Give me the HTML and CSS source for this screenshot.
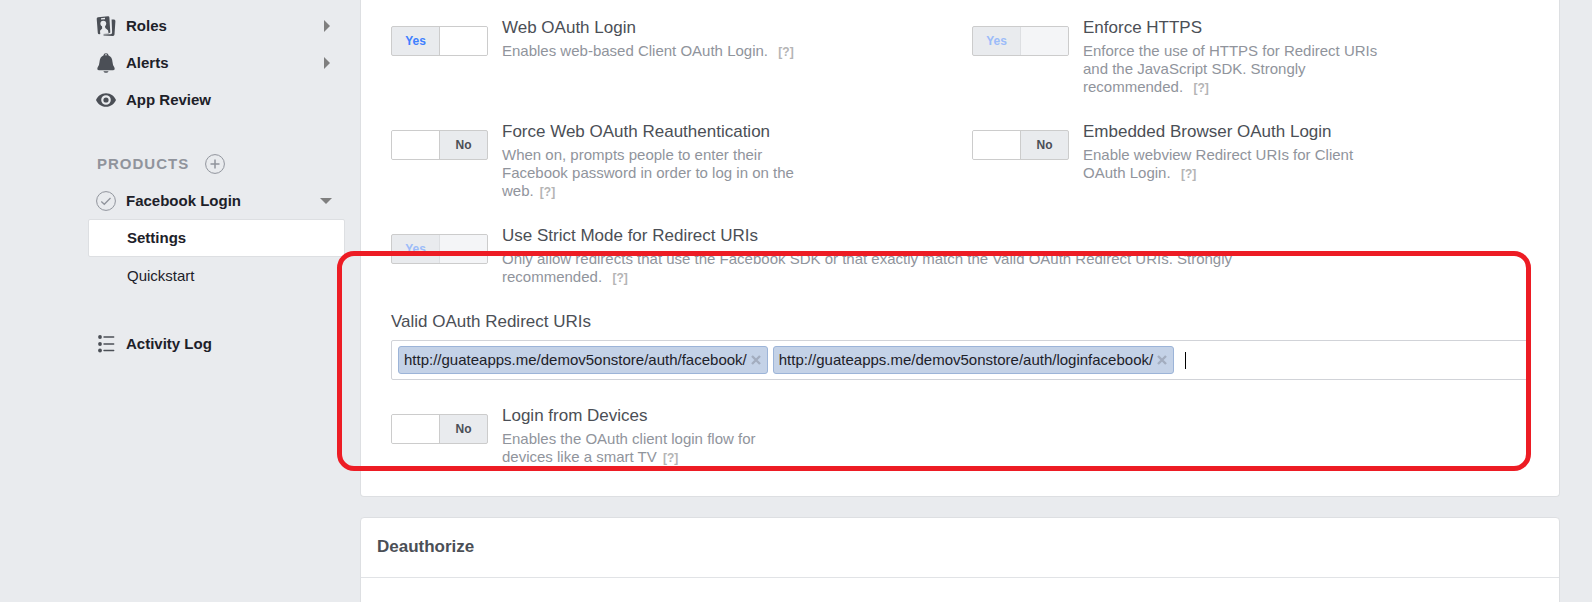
FILE: index.html
```html
<!DOCTYPE html>
<html lang="en">
<head>
<meta charset="utf-8">
<title>Facebook Login Settings</title>
<link rel="stylesheet" href="styles.css">
</head>
<body>
<div class="page">
  <nav class="sidebar" aria-label="App navigation">
    <a class="nav-item" href="#roles">
      <svg class="nav-icon" viewBox="0 0 20 20" aria-hidden="true">
        <path fill="#4b4f56" d="M2 1.200 12 .3Q13.300.2 13.400 1.500L14.300 16.500 12.600 17.400 4.500 18 3.300 18.200Q1.900 18.200 1.800 17L.7 2.700Q.7 1.400 2 1.200Z"/>
        <g fill="#e9ebee"><path d="M5 2.200 9 1.800V3.200L5 3.500Z"/><circle cx="7.300" cy="7.600" r="2.900"/><path d="M6 10H9L9.300 12 12 14.300 12.600 17.400 4.300 18.200 4 14.800 6.200 12.500Z"/></g>
        <path fill="#4b4f56" d="M15.600 3.400 18 3.600Q19.500 3.800 19.400 5.200L18.500 18.500Q18.300 19.900 17 19.900L7.500 19.400V18.500L14.500 18.200Q16.200 18 16.100 16.500Z"/>
      </svg>
      <span class="nav-label">Roles</span>
      <svg class="nav-arrow" viewBox="0 0 12 12" aria-hidden="true"><path fill="#7f7f7f" d="M4 0 10 6 4 12Z"/></svg>
    </a>
    <a class="nav-item" href="#alerts">
      <svg class="nav-icon" viewBox="0 0 20 20" aria-hidden="true">
        <path fill="#4b4f56" fill-rule="evenodd" d="M10 .3Q12.400.3 12.600 2.600 16.200 4 16.500 9 16.700 12.500 18.400 14.500 19.400 17.300 17 17.300H3Q.6 17.300 1.600 14.500 3.300 12.500 3.500 9 3.800 4 7.400 2.600 7.600.3 10 .3ZM10 1.200Q8.900 1.200 8.700 2.200H11.300Q11.100 1.200 10 1.200Z"/>
        <path fill="#4b4f56" d="M7.400 18.300H12.600Q12 19.800 10 19.800T7.400 18.300Z"/>
      </svg>
      <span class="nav-label">Alerts</span>
      <svg class="nav-arrow" viewBox="0 0 12 12" aria-hidden="true"><path fill="#7f7f7f" d="M4 0 10 6 4 12Z"/></svg>
    </a>
    <a class="nav-item" href="#review">
      <svg class="nav-icon" viewBox="0 0 20 20" aria-hidden="true">
        <path fill="#4b4f56" fill-rule="evenodd" d="M10 3.200C15 3.200 18.500 6.500 20 10 18.500 13.500 15 16.800 10 16.800S1.500 13.500 0 10C1.500 6.500 5 3.200 10 3.200ZM10 5.200A4.800 4.800 0 1 0 10 14.800 4.800 4.800 0 1 0 10 5.200Z"/>
        <circle cx="10" cy="10" r="2.600" fill="#4b4f56"/>
      </svg>
      <span class="nav-label">App Review</span>
    </a>

    <div class="nav-heading">
      <h2 class="heading-text">PRODUCTS</h2>
      <button class="add-button" type="button" aria-label="Add product">
        <svg class="nav-icon" viewBox="0 0 20 20" aria-hidden="true" fill="none" stroke="#90949c"><circle cx="10" cy="10" r="9.400"/><path stroke-width="1.500" d="M10 5.500V14.500M5.500 10H14.500"/></svg>
      </button>
    </div>

    <a class="nav-item" href="#login">
      <svg class="nav-icon" viewBox="0 0 20 20" aria-hidden="true" fill="none" stroke="#90949c"><circle cx="10" cy="10" r="9.400"/><path stroke-width="1.300" d="M5.300 10.500 8.300 13.300 14.500 7"/></svg>
      <span class="nav-label">Facebook Login</span>
      <svg class="nav-arrow" viewBox="0 0 12 12" aria-hidden="true"><path fill="#7f7f7f" d="M0 3H12L6 9Z"/></svg>
    </a>
    <a class="sub-item selected" href="#settings" aria-current="page">Settings</a>
    <a class="sub-item" href="#quickstart">Quickstart</a>

    <a class="nav-item activity" href="#activity">
      <svg class="nav-icon" viewBox="0 0 20 20" aria-hidden="true">
        <g fill="#4b4f56"><circle cx="4" cy="3" r="1.900"/><circle cx="4" cy="10" r="1.900"/><circle cx="4" cy="16.500" r="1.900"/></g>
        <path stroke="#4b4f56" stroke-width="1.400" stroke-linecap="round" d="M8 3H17.700M8 10H17.700M8 16.500H17.700"/>
      </svg>
      <span class="nav-label">Activity Log</span>
    </a>
  </nav>

  <main class="content">
    <section class="card settings-card">
      <div class="setting-grid">
        <div class="setting">
          <button class="toggle on" type="button" role="switch" aria-checked="true" aria-labelledby="t1"><span class="toggle-text">Yes</span><span class="knob"></span></button>
          <div class="setting-body">
            <h3 class="title" id="t1">Web OAuth Login</h3>
            <p class="desc">Enables web-based Client OAuth Login. &nbsp;<a class="help spaced" href="#help">[?]</a></p>
          </div>
        </div>
        <div class="setting">
          <button class="toggle on" type="button" role="switch" aria-checked="true" aria-labelledby="t2" disabled><span class="toggle-text">Yes</span><span class="knob"></span></button>
          <div class="setting-body">
            <h3 class="title" id="t2">Enforce HTTPS</h3>
            <p class="desc">Enforce the use of HTTPS for Redirect URIs and the JavaScript SDK. Strongly recommended. &nbsp;<a class="help spaced" href="#help">[?]</a></p>
          </div>
        </div>
        <div class="setting">
          <button class="toggle" type="button" role="switch" aria-checked="false" aria-labelledby="t3"><span class="knob"></span><span class="toggle-text">No</span></button>
          <div class="setting-body">
            <h3 class="title" id="t3">Force Web OAuth Reauthentication</h3>
            <p class="desc">When on, prompts people to enter their Facebook password in order to log in on the web. <a class="help spaced" href="#help">[?]</a></p>
          </div>
        </div>
        <div class="setting">
          <button class="toggle" type="button" role="switch" aria-checked="false" aria-labelledby="t4"><span class="knob"></span><span class="toggle-text">No</span></button>
          <div class="setting-body">
            <h3 class="title" id="t4">Embedded Browser OAuth Login</h3>
            <p class="desc">Enable webview Redirect URIs for Client OAuth Login. &nbsp;<a class="help spaced" href="#help">[?]</a></p>
          </div>
        </div>
      </div>

      <div class="setting">
        <button class="toggle on" type="button" role="switch" aria-checked="true" aria-labelledby="t5" disabled><span class="toggle-text">Yes</span><span class="knob"></span></button>
        <div class="setting-body">
          <h3 class="title" id="t5">Use Strict Mode for Redirect URIs</h3>
          <p class="desc wide">Only allow redirects that use the Facebook SDK or that exactly match the Valid OAuth Redirect URIs. Strongly recommended. &nbsp;<a class="help spaced" href="#help">[?]</a></p>
        </div>
      </div>

      <div class="field">
        <label class="title" for="uris">Valid OAuth Redirect URIs</label>
        <div class="token-box">
          <span class="token">http://guateapps.me/demov5onstore/auth/facebook/<button class="remove" type="button" aria-label="Remove"><svg class="cross" viewBox="0 0 10 10" aria-hidden="true"><path stroke="#a3adbf" stroke-width="2.400" d="M1 1 9 9M9 1 1 9"/></svg></button></span>
          <span class="token">http://guateapps.me/demov5onstore/auth/loginfacebook/<button class="remove" type="button" aria-label="Remove"><svg class="cross" viewBox="0 0 10 10" aria-hidden="true"><path stroke="#a3adbf" stroke-width="2.400" d="M1 1 9 9M9 1 1 9"/></svg></button></span>
          <span class="caret"></span>
          <input class="token-input" id="uris" type="text">
        </div>
      </div>

      <div class="setting">
        <button class="toggle" type="button" role="switch" aria-checked="false" aria-labelledby="t6"><span class="knob"></span><span class="toggle-text">No</span></button>
        <div class="setting-body">
          <h3 class="title" id="t6">Login from Devices</h3>
          <p class="desc">Enables the OAuth client login flow for devices like a smart TV <a class="help spaced" href="#help">[?]</a></p>
        </div>
      </div>
    </section>

    <section class="card next-card">
      <h2 class="card-header">Deauthorize</h2>
    </section>

    <div class="highlight"></div>
  </main>
</div>
</body>
</html>
```
FILE: styles.css
```css
* { box-sizing: border-box; }

body {
  margin: 0;
  background: #e9ebee;
  color: #1d2129;
  font: 15px/18px "Liberation Sans", Arial, sans-serif;
}

h2, h3, p { margin: 0; }
a { color: inherit; text-decoration: none; }
button { font: inherit; padding: 0; cursor: pointer; }

.page {
  display: flex;
  gap: 15px;
  height: 100vh;
  padding: 0 32px 0 88px;
  overflow: hidden;
}

/* Sidebar */
.sidebar { flex: 0 0 257px; padding-top: 7px; }

.nav-item {
  display: flex;
  align-items: center;
  height: 37px;
  padding: 0 13px 0 8px;
  font-weight: bold;
}
.nav-icon { display: block; width: 20px; height: 20px; }
.nav-label { flex: 1; margin-left: 10px; }
.nav-arrow { width: 12px; height: 12px; }

.nav-heading {
  display: flex;
  align-items: center;
  gap: 16px;
  height: 37px;
  margin-top: 27px;
  padding-left: 9px;
}
.heading-text {
  color: #90949c;
  font-size: 15px;
  letter-spacing: 1px;
}
.add-button { border: 0; background: none; }

.sub-item {
  display: flex;
  align-items: center;
  height: 37px;
  padding-left: 38px;
  border: 1px solid transparent;
}
.selected {
  height: 38px;
  border-color: #dddfe2;
  border-radius: 2px;
  background: #fff;
  font-weight: bold;
}
.activity { margin-top: 31px; }

/* Content */
.content {
  position: relative;
  display: flex;
  flex: 1;
  flex-direction: column;
  gap: 20px;
  min-width: 0;
}
.card {
  flex-shrink: 0;
  border: 1px solid #dddfe2;
  border-radius: 4px;
  background: #fff;
}
.settings-card {
  display: flex;
  flex-direction: column;
  gap: 24px;
  padding: 16px 30px 30px;
  border-top: 0;
  border-top-left-radius: 0;
  border-top-right-radius: 0;
}
.setting-grid {
  display: grid;
  grid-template-columns: 1fr 1fr;
  gap: 24px;
}
.setting { display: flex; gap: 14px; }

.title {
  display: block;
  color: #4b4f56;
  font-size: 17px;
  font-weight: normal;
  line-height: 24px;
}
.desc {
  max-width: 300px;
  margin-top: 2px;
  color: #90949c;
}
.wide { max-width: 760px; }
.help {
  color: #b4b4b4;
  font-size: 12px;
  font-weight: bold;
  line-height: 12px;
}
.spaced { margin-left: 2px; }

/* Yes/No switch */
.toggle {
  display: flex;
  flex: 0 0 97px;
  height: 30px;
  margin-top: 10px;
  border: 1px solid #ccc;
  border-radius: 2px;
  background: #e9ebee;
  color: #4b4f56;
  font-size: 12px;
  font-weight: bold;
  line-height: 28px;
  overflow: hidden;
}
.toggle-text { flex: 1; text-align: center; }
.knob {
  flex: 0 0 48px;
  height: 28px;
  border-right: 1px solid #ccc;
  background: #fff;
}
.on { color: #4080ff; }
.on .knob {
  border-right: 0;
  border-left: 1px solid #ccc;
}
.toggle:disabled { color: #9cbcf9; }
.toggle:disabled .knob { border-color: #dddfe2; background: #f4f5f7; }

/* Redirect URI tokens */
.token-box {
  display: flex;
  align-items: center;
  gap: 5px;
  height: 40px;
  margin-top: 6px;
  padding: 0 6px;
  border: 1px solid #d1d3d8;
  border-radius: 2px;
}
.token {
  display: flex;
  flex-shrink: 0;
  align-items: center;
  gap: 4px;
  height: 28px;
  padding: 0 6px 0 5px;
  border: 1px solid #9cb4d8;
  border-radius: 3px;
  background: #c4d2e7;
}
.remove { border: 0; background: none; }
.cross { display: block; width: 10px; height: 10px; }
.caret {
  width: 1px;
  height: 17px;
  margin-left: 6px;
  background: #000;
}
.token-input {
  flex: 1;
  min-width: 0;
  border: 0;
  outline: 0;
  background: transparent;
  font: inherit;
}

.card-header {
  padding: 17px 16px 18px;
  border-bottom: 1px solid #e1e3e6;
  color: #4b4f56;
  font-size: 17px;
  line-height: 24px;
}
.next-card { min-height: 120px; }

/* Marker frame laid over the redirect settings */
.highlight {
  position: absolute;
  top: 251px;
  right: 29px;
  left: -23px;
  height: 220px;
  border: 5px solid #ed1c24;
  border-radius: 17px;
  pointer-events: none;
}
```
